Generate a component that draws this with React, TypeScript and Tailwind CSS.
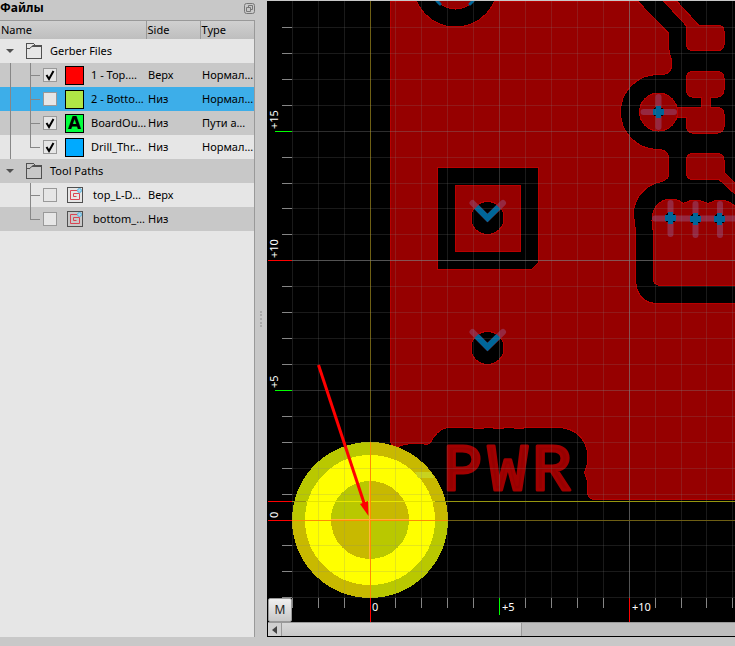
import React from "react";

type Item = {
  name: string;
  side?: string;
  type?: string;
  group?: boolean;
  checked?: boolean;
  icon?: "swatch" | "board" | "path";
  color?: string;
  selected?: boolean;
  last?: boolean;
  outer?: boolean;
};

const items: Item[] = [
  { name: "Gerber Files", group: true },
  { name: "1 - Top.…", side: "Верх", type: "Нормал…", checked: true, icon: "swatch", color: "#ff0000", outer: true },
  { name: "2 - Botto…", side: "Низ", type: "Нормал…", checked: false, icon: "swatch", color: "#b0e646", selected: true, outer: true },
  { name: "BoardOu…", side: "Низ", type: "Пути а…", checked: true, icon: "board", color: "#00ff3c", outer: true },
  { name: "Drill_Thr…", side: "Низ", type: "Нормал…", checked: true, icon: "swatch", color: "#00aaff", last: true, outer: true },
  { name: "Tool Paths", group: true },
  { name: "top_L-D…", side: "Верх", checked: false, icon: "path" },
  { name: "bottom_…", side: "Низ", checked: false, icon: "path", last: true },
];

function Folder() {
  return (
    <svg width="16" height="16" fill="none" stroke="#505050" className="shrink-0" shapeRendering="crispEdges">
      <path d="M.5 15.500V.5H7.500M.5 5.500H3.500M9 3.500H15.500V15.500H.5" />
      <path d="M3 6L7 2.500" shapeRendering="auto" />
      <path d="M6 4L8 1L10 2H16V4Z" fill="#505050" stroke="none" />
    </svg>
  );
}

function ToolPathIcon() {
  return (
    <svg width="16" height="16" fill="none" className="shrink-0">
      <rect x=".5" y=".5" width="15" height="15" stroke="#505050" />
      <path d="M10 3.500H3.500v9h9v-6h-6v3h3" stroke="#da4453" />
      <circle cx="12.500" cy="3.500" r="2" fill="#a5d5ec" stroke="#5cb3dd" />
    </svg>
  );
}

function Branch({ outer, last }: { outer?: boolean; last?: boolean }) {
  return (
    <svg width="43" height="24" stroke="#878787" className="shrink-0" shapeRendering="crispEdges">
      {outer && <path d="M10.500 0v24" />}
      <path d={last ? "M30.500 0v12.500" : "M30.500 0v24"} />
      <path d="M30.500 12.500H40" />
    </svg>
  );
}

function Tick({ item }: { item: Item }) {
  return (
    <span className="relative flex h-[14px] w-[14px] shrink-0">
      <input
        type="checkbox"
        defaultChecked={item.checked}
        aria-label={item.name}
        className="peer h-[14px] w-[14px] appearance-none border border-[#999] bg-[#e6e6e6]"
      />
      <svg
        viewBox="0 0 14 14"
        className="pointer-events-none absolute inset-0 hidden h-[14px] w-[14px] peer-checked:block"
      >
        <path d="M3.500 7l2.500 4L10.500 3" fill="none" stroke="#000" strokeWidth="2" />
      </svg>
    </span>
  );
}

function Row({ item, index }: { item: Item; index: number }) {
  const bg = item.selected ? "bg-[#3daee9]" : index % 2 ? "bg-[#c8c8c8]" : "bg-[#e6e6e6]";
  return (
    <tr className={`h-6 ${bg}`}>
      <td className="overflow-hidden p-0">
        {item.group ? (
          <div className="flex h-6 items-center">
            <button aria-label={`Collapse ${item.name}`} className="flex w-[26px] pl-[6px]">
              <svg width="8" height="5">
                <path d="M0 0h8L4 4z" fill="#505050" />
              </svg>
            </button>
            <Folder />
            <span className="pl-2">{item.name}</span>
          </div>
        ) : (
          <div className="flex h-6 items-center">
            <Branch outer={item.outer} last={item.last} />
            <Tick item={item} />
            <span className="flex w-[33px] shrink-0 justify-center pl-[2px]">
              {item.icon === "path" ? (
                <ToolPathIcon />
              ) : (
                <span
                  className="flex h-[19px] w-[19px] items-center justify-center border border-black font-['DejaVu_Sans'] text-[17px] leading-[17px] font-bold"
                  style={{ backgroundColor: item.color }}
                >
                  {item.icon === "board" ? "A" : ""}
                </span>
              )}
            </span>
            <span className={item.icon === "path" ? "pl-[3px]" : "pl-px"}>{item.name}</span>
          </div>
        )}
      </td>
      <td className="overflow-hidden p-0 pl-[2px]">{item.side}</td>
      <td className="overflow-hidden p-0 pl-[2px]">{item.type}</td>
    </tr>
  );
}

function FilesPanel() {
  return (
    <aside className="flex w-[255px] shrink-0 flex-col">
      <div className="flex h-5 shrink-0 items-center justify-between text-[12px] font-bold leading-4">
        <h1 className="pb-1">Файлы</h1>
        <button aria-label="Float panel" className="pb-1">
          <svg width="11" height="11" fill="none" stroke="#777" className="block">
            <rect x=".5" y=".5" width="10" height="10" rx="2" />
            <path d="M4.500 4.500v-2h4v4h-2M2.500 4.500h4v4h-4z" />
          </svg>
        </button>
      </div>
      <div className="flex-1 border-t border-r border-[#999] bg-[#e6e6e6]">
        <table className="w-full table-fixed border-collapse text-left text-[11px] leading-4 whitespace-nowrap">
          <colgroup>
            <col className="w-[146px]" />
            <col className="w-[54px]" />
            <col />
          </colgroup>
          <thead>
            <tr className="h-[18px] bg-linear-to-b from-[#d0d0d0] to-[#bebebe]">
              <th className="border-r border-[#999] p-0 pl-px font-normal">Name</th>
              <th className="border-r border-[#999] p-0 pl-px font-normal">Side</th>
              <th className="p-0 pl-px font-normal">Type</th>
            </tr>
          </thead>
          <tbody>
            {items.map((item, i) => (
              <Row key={item.name} item={item} index={i} />
            ))}
          </tbody>
        </table>
      </div>
    </aside>
  );
}

const STEP = 25.92;
const columns = Array.from({ length: 18 }, (_, i) => i - 3);
const rows = Array.from({ length: 23 }, (_, i) => i - 3);
const gx = (n: number) => Math.floor(370 + n * STEP) + 0.5;
const gy = (n: number) => Math.floor(520 - n * STEP) + 0.5;
const tickColor = (n: number) => (n % 10 === 0 ? "#ff0000" : n % 5 === 0 ? "#00ff00" : "#858585");
const tickLength = (n: number) => (n % 10 === 0 ? 24 : n % 5 === 0 ? 17 : 10);

function Copper() {
  return (
    <g fill="#960000" stroke="#b80000" shapeRendering="crispEdges">
      <path d="M390.500 1.500H638L668.500 33V48L670 55L672 62Q672 74.500 662 74.500H658A37.500 37.500 0 0 0 658 149.500Q668.500 149.500 668.500 158V175Q668.500 179 662 181.500C646 184 633 198 633.500 215L635.500 231V280Q637 303.500 658 303.500H736V499.500H594Q587.500 499 587.500 491V481L584.500 473L587.500 463V452Q583 430 560 427.500L541 428L528 427L519 429L508 427L499 429L488 427L480 429L470 427.500H449Q440 428 433 438Q430 446 424 444Q408 442 397 447Q391 446 390.500 441Z" />
      <circle cx="455.500" cy="-15" r="42" fill="#000" />
      <circle cx="455.500" cy="-15" r="24" />
      <path d="M437.500 167.500H538.500V262.500L532 269H437.500Z" fill="#000" />
      <path d="M455.500 185.500H520.500V251H455.500Z" />
      <circle cx="487.500" cy="218" r="16.500" fill="#000" />
      <circle cx="487.500" cy="348" r="16.500" fill="#000" />

      <path d="M664 1.500H677L699 25.500H719Q724 26 724 31V45Q723 50.500 718 50.500H692Q686.500 50 686.500 44V26Z" />
      <path d="M692 71.500H718Q724 72 724 78V90Q723 97 718 97H710V107.500H718Q724 108 724 114V127Q723 133 718 133H692Q686.500 132 686.500 126V117H677V107.500H701.500V97H692Q686.500 96 686.500 90V78Q687 72 692 71.500Z" />
      <circle cx="658.500" cy="112" r="19" />
      <path d="M692 153.500H718Q724 154 724 160V172L736 184V195L719 179.500H692Q686.500 179 686.500 173V160Q687 154 692 153.500Z" />
      <path d="M653.500 232C649 214 655 203 665 200Q676 197 683 203.500Q695 197 708 203.500Q720 197 731 203L736 207V285.500H660Q653.500 285 653.500 279Z" />
    </g>
  );
}

function Drills() {
  return (
    <g fill="none" strokeLinecap="round">
      <g stroke="#962840" strokeWidth="6">
        <path d="M472.500 203L487.500 218L503 203M472.500 332L487.500 347L503 332" />
        <path d="M658.500 97V127M643.500 112H674" />
        <path d="M670.500 203V234M655 218.500H736M695.500 204V235M720 204V235" />
      </g>
      <g stroke="#006699" strokeWidth="6" strokeLinecap="butt">
        <path d="M476.500 207L487.500 218L498.500 207M476.500 336L487.500 347L498.500 336" />
      </g>
      <g shapeRendering="crispEdges">
        {[
          [658, 112],
          [670, 218],
          [695, 219],
          [719, 219],
        ].map(([x, y]) => (
          <g key={x} transform={`translate(${x} ${y})`}>
            <circle cx="0.500" cy="0" r="5.500" fill="#000" />
            <path d="M-2 -6H3V-3H6V3H3V6H-2V3H-5V-3H-2Z" fill="#006699" />
          </g>
        ))}
      </g>
      <path d="M437 1l3 3M473 1l-3 3" stroke="#006699" strokeWidth="3" />
    </g>
  );
}

function Origin() {
  return (
    <g shapeRendering="crispEdges">
      <circle cx="370" cy="520" r="78" fill="#c8b900" />
      <path d="M370 520H292A78 78 0 0 1 370 442ZM370 520H448A78 78 0 0 1 370 598Z" fill="#b9c800" />
      <circle cx="370" cy="520" r="52" fill="none" stroke="#ffff00" strokeWidth="26" />
      <path d="M415 472H431L434 478H418Z" fill="#c8d21e" />
    </g>
  );
}

function Board() {
  return (
    <svg viewBox="267 0 468 622" className="block w-full bg-black" role="img" aria-label="PCB layout">
      <rect x="267" y="0" width="468" height="622" />
      <Copper />
      <text
        x="443 488 532"
        y="490"
        fill="#960000"
        stroke="#a00000"
        strokeWidth="3"
        strokeLinejoin="round"
        className="font-['Liberation_Mono',monospace] text-[66px]"
      >
        PWR
      </text>
      <Drills />
      <Origin />
      <g shapeRendering="crispEdges">
        {columns.map((n) => (
          <path
            key={n}
            d={`M${gx(n)} 1V598`}
            stroke={n === 0 ? "#6e5f14" : "#808080"}
            strokeOpacity={n === 0 ? 1 : n % 10 === 0 ? 0.65 : n % 5 === 0 ? 0.35 : 0.2}
          />
        ))}
        {rows.map((n) => (
          <path
            key={n}
            d={`M292 ${gy(n)}H735`}
            stroke={n === 0 ? "#6e5f14" : "#808080"}
            strokeOpacity={n === 0 ? 1 : n % 10 === 0 ? 0.65 : n % 5 === 0 ? 0.35 : 0.2}
          />
        ))}
        <path d="M292 501.500H735" stroke="#96960f" />
        <path d="M268 501.500H292" stroke="#ff0000" />
        <path d="M306 501.500H435" stroke="#e6e600" />
        <path d="M292 520.500H448M370.500 442V598" stroke="#ff8c00" />
        <path d="M331 519.500H409M369.500 481V559" stroke="#ffb43c" />
        {columns.map((n) => (
          <path key={n} d={`M${gx(n)} 598v${tickLength(n)}`} stroke={tickColor(n)} />
        ))}
        {rows.map((n) => (
          <path key={n} d={`M292 ${gy(n)}h-${tickLength(n)}`} stroke={tickColor(n)} />
        ))}
      </g>
      <g fill="#fff" className="font-['Noto_Sans',sans-serif] text-[11px]">
        <text x="372" y="611">0</text>
        <text x="502" y="611">+5</text>
        <text x="632" y="611">+10</text>
        <text transform="translate(278 518) rotate(-90)">0</text>
        <text transform="translate(278 388) rotate(-90)">+5</text>
        <text transform="translate(278 258) rotate(-90)">+10</text>
        <text transform="translate(278 129) rotate(-90)">+15</text>
      </g>
      <path d="M318.500 365L365 506" stroke="#ff0000" strokeWidth="3" />
      <path d="M360 504L368 501L368.500 516Z" fill="#ff0000" />
      <path d="M267 .5H735" stroke="#c8c8c8" />
    </svg>
  );
}

export default function App() {
  return (
    <div className="flex min-h-screen flex-col bg-[#c8c8c8] pb-[9px] font-['Noto_Sans',sans-serif] text-black">
      <div className="flex flex-1">
        <FilesPanel />
        <div className="flex w-3 shrink-0 items-center justify-center">
          <div className="h-4 border-l-2 border-dotted border-[#aaa]" />
        </div>
        <main className="flex min-w-0 flex-1 flex-col">
          <div className="relative">
            <Board />
            <button className="absolute bottom-0 left-px h-6 w-6 rounded-xs border border-[#999] bg-linear-to-b from-[#f0f0f0] to-[#c8c8c8] text-[12px] leading-4 text-[#222]">
              M
            </button>
          </div>
          <div className="flex h-[15px] border-b border-l border-black bg-[#bebebe]">
            <button
              aria-label="Scroll left"
              className="flex w-[14px] shrink-0 items-center justify-center border-t border-r border-[#999] bg-[#d0d0d0]"
            >
              <svg width="5" height="8">
                <path d="M5 0v8L0 4z" fill="#444" />
              </svg>
            </button>
            <div className="flex-1 border-t border-[#999]">
              <div className="h-full w-[53%] border-r border-[#999] bg-linear-to-b from-[#d8d8d8] to-[#c8c8c8]" />
            </div>
          </div>
        </main>
      </div>
    </div>
  );
}
